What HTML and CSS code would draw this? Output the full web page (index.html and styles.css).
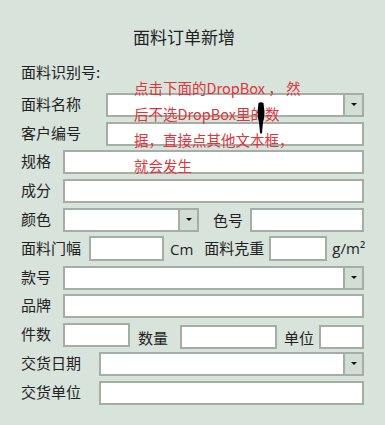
FILE: index.html
```html
<!DOCTYPE html>
<html lang="zh-CN">
<head>
    <meta charset="UTF-8">
    <meta name="viewport" content="width=device-width, initial-scale=1.0">
    <title>面料订单新增</title>
    <link rel="stylesheet" href="styles.css">
</head>
<body>
    <div class="page">
        <h1 class="title">面料订单新增</h1>

        <div class="form">
            <div class="row row-first">
                <span class="label">面料识别号:</span>
            </div>
            <div class="row">
                <span class="label w-85">面料名称</span>
                <div class="select grow"><span class="select-btn"><i class="arrow"></i></span></div>
            </div>
            <div class="row">
                <span class="label w-85">客户编号</span>
                <input class="text grow" type="text">
            </div>
            <div class="row">
                <span class="label w-42">规格</span>
                <input class="text grow" type="text">
            </div>
            <div class="row">
                <span class="label w-42">成分</span>
                <input class="text grow" type="text">
            </div>
            <div class="row">
                <span class="label w-42">颜色</span>
                <div class="select color-select"><span class="select-btn"><i class="arrow"></i></span></div>
                <span class="label color-no">色号</span>
                <input class="text grow" type="text">
            </div>
            <div class="row">
                <span class="label w-68">面料门幅</span>
                <input class="text width-box" type="text">
                <span class="label unit-cm">Cm</span>
                <span class="label">面料克重</span>
                <input class="text weight-box" type="text">
                <span class="label unit-gm">g/m²</span>
            </div>
            <div class="row">
                <span class="label w-42">款号</span>
                <div class="select grow"><span class="select-btn"><i class="arrow"></i></span></div>
            </div>
            <div class="row">
                <span class="label w-42">品牌</span>
                <input class="text grow" type="text">
            </div>
            <div class="row qty-row">
                <span class="label w-42">件数</span>
                <input class="text pieces" type="text">
                <span class="label qty-label low">数量</span>
                <input class="text qty low" type="text">
                <span class="label unit-label low">单位</span>
                <input class="text grow low" type="text">
            </div>
            <div class="row">
                <span class="label w-78">交货日期</span>
                <div class="select grow"><span class="select-btn"><i class="arrow"></i></span></div>
            </div>
            <div class="row">
                <span class="label w-78">交货单位</span>
                <input class="text grow" type="text">
            </div>
        </div>

        <!-- note drawn on top of the form -->
        <div class="note">点击下面的DropBox ， 然<br>后不选DropBox里的数<br>据，直接点其他文本框，<br>就会发生</div>

        <svg class="cursor" width="10" height="32" viewBox="0 0 10 32">
            <path d="M2.5 1 Q5 -0.5 7.5 1 L8.5 10 Q8.5 16 7 20 L6 31 Q5 32 4 31 L3 20 Q1.5 16 1.5 10 Z" fill="#000"/>
        </svg>
    </div>
</body>
</html>
```

FILE: styles.css
```css
body {
    margin: 0;
    background: #d8e3db;
    font-family: "Noto Sans CJK SC", "Noto Sans", sans-serif;
    color: #222;
}
.page {
    position: relative;
    width: 385px;
    height: 425px;
    padding: 24px 21px 0 21px;
    box-sizing: border-box;
}
.title {
    margin: 0 0 0 112px;
    font-size: 17px;
    font-weight: normal;
    line-height: 26px;
    color: #222;
}
.form {
    display: flex;
    flex-direction: column;
    gap: 4.8px;
    margin-top: 11px;
}
.row {
    display: flex;
    align-items: center;
    height: 24px;
}
.row-first {
    margin-bottom: 3px;
}
.label {
    font-size: 15px;
    line-height: 20px;
    white-space: nowrap;
    flex-shrink: 0;
    margin-top: -2px;
}
.w-85 { width: 85px; }
.w-42 { width: 42px; }
.w-68 { width: 68px; }
.w-78 { width: 78px; }

.text, .select {
    box-sizing: border-box;
    height: 24px;
    border: 2px solid #a4ada6;
    background: #fff;
    margin: 0;
    padding: 0 4px;
    font: inherit;
    flex-shrink: 0;
}
.text:focus {
    outline: none;
}
.grow {
    flex: 1;
    min-width: 0;
}
.select {
    position: relative;
    padding: 0;
}
.select-btn {
    position: absolute;
    top: 0;
    right: 0;
    bottom: 0;
    width: 17px;
    background: #d2ddd5;
    border-left: 2px solid #a4ada6;
    display: flex;
    align-items: center;
    justify-content: center;
}
.arrow {
    width: 0;
    height: 0;
    border-left: 3px solid transparent;
    border-right: 3px solid transparent;
    border-top: 3px solid #111;
}

.color-select { width: 136px; }
.color-no { margin: 0 7px 0 14px; }

.width-box { width: 75px; height: 25px; }
.unit-cm { margin: 0 11px 0 6px; font-family: "Open Sans", sans-serif; }
.weight-box { width: 58px; height: 25px; margin-left: 5px; }
.unit-gm { margin-left: 5px; font-family: "Open Sans", sans-serif; }

.qty-row .low { margin-top: 4px; }
.qty-row .label.low { margin-top: 6px; }
.pieces { width: 67px; }
.qty-label { margin: 0 12px 0 8px; }
.qty { width: 97px; }
.unit-label { margin: 0 5px 0 7px; }

.note {
    position: absolute;
    left: 134px;
    top: 75px;
    font-size: 14.5px;
    line-height: 26px;
    color: #e0343a;
    white-space: nowrap;
}
.cursor {
    position: absolute;
    left: 256px;
    top: 102px;
}
```
